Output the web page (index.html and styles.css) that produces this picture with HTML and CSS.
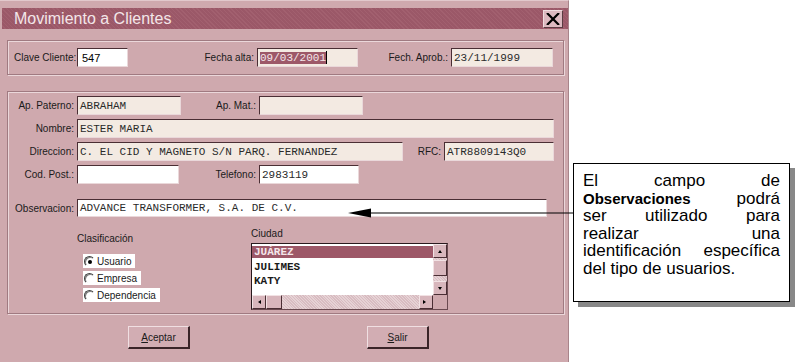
FILE: index.html
```html
<!DOCTYPE html>
<html lang="es">
<head>
  <meta charset="UTF-8">
  <title>Movimiento a Clientes</title>
  <link rel="stylesheet" href="styles.css">
</head>
<body>

<div class="page">
  <!-- Dialog -->
  <div class="dialog">
    <div class="titlebar">
      <span class="title">Movimiento a Clientes</span>
      <span class="close">
        <svg width="14" height="12" viewBox="0 0 14 12"><path d="M1 0 L13 12 M13 0 L1 12" stroke="#000" stroke-width="2.2"/></svg>
      </span>
    </div>

    <div class="group group-top">
      <span class="lbl w-clave">Clave Cliente:</span>
      <span class="field white sans w51">547</span>
      <span class="lbl right w128">Fecha alta:</span>
      <span class="field w101"><span class="sel">09/03/2001</span><span class="caret"></span></span>
      <span class="lbl right w93">Fech. Aprob.:</span>
      <span class="field w102">23/11/1999</span>
    </div>

    <div class="group group-main">
      <div class="row">
        <span class="lbl right col">Ap. Paterno:</span>
        <span class="field w104">ABRAHAM</span>
        <span class="lbl right w78">Ap. Mat.:</span>
        <span class="field w104"></span>
      </div>
      <div class="row">
        <span class="lbl right col">Nombre:</span>
        <span class="field w477">ESTER MARIA</span>
      </div>
      <div class="row">
        <span class="lbl right col">Direccion:</span>
        <span class="field w326">C. EL CID Y MAGNETO S/N PARQ. FERNANDEZ</span>
        <span class="lbl right w41">RFC:</span>
        <span class="field w110">ATR8809143Q0</span>
      </div>
      <div class="row">
        <span class="lbl right col">Cod. Post.:</span>
        <span class="field white w102"></span>
        <span class="lbl right w80">Telefono:</span>
        <span class="field white w100">2983119</span>
      </div>
      <div class="row row-obs">
        <span class="lbl right col">Observacion:</span>
        <span class="field white w470">ADVANCE TRANSFORMER, S.A. DE C.V.</span>
      </div>

      <div class="lower">
        <div class="clasif">
          <div class="caption">Clasificación</div>
          <div class="radios">
            <div class="radio"><span class="dot on"></span>Usuario</div>
            <div class="radio"><span class="dot"></span>Empresa</div>
            <div class="radio"><span class="dot"></span>Dependencia</div>
          </div>
        </div>
        <div class="ciudad">
          <div class="caption">Ciudad</div>
          <div class="listbox">
            <div class="list-body">
              <div class="items">
                <div class="item active">JUÁREZ</div>
                <div class="item">JULIMES</div>
                <div class="item">KATY</div>
              </div>
              <div class="vscroll">
                <span class="sbtn"><span class="tri up"></span></span>
                <span class="thumb-v"></span>
                <span class="track"></span>
                <span class="sbtn"><span class="tri down"></span></span>
              </div>
            </div>
            <div class="hscroll">
              <span class="sbtn"><span class="tri left"></span></span>
              <span class="thumb-h"></span>
              <span class="track"></span>
              <span class="sbtn"><span class="tri right"></span></span>
              <span class="corner"></span>
            </div>
          </div>
        </div>
      </div>
    </div>

    <div class="buttons">
      <span class="btn btn-ok"><u>A</u>ceptar</span>
      <span class="btn btn-exit"><u>S</u>alir</span>
    </div>
  </div>

  <!-- Note -->
  <div class="note">
    <span class="line">El campo de</span>
    <span class="line"><b>Observaciones</b> podrá</span>
    <span class="line">ser utilizado para</span>
    <span class="line">realizar una</span>
    <span class="line">identificación específica</span>
    <span class="line last">del tipo de usuarios.</span>
  </div>
  <svg class="arrow" width="230" height="12" viewBox="0 0 230 12">
    <path d="M22 6 H226" stroke="#000" stroke-width="1.2"/>
    <path d="M0 6 L23 1.5 L23 10.5 Z" fill="#000"/>
  </svg>
</div>

</body>
</html>
```

FILE: styles.css
```css
body {
  margin: 0;
  background: #fff;
  font-family: "Liberation Sans", Arial, sans-serif;
}
.page {
  position: relative;
  width: 796px;
  height: 362px;
}
.dialog {
  width: 568px;
  height: 359px;
  background: #cfa9ae;
  border-top: 1px solid #e2c8cc;
  border-right: 1px solid #a8848a;
  border-bottom: 2px solid #b58f95;
  padding-top: 7px;
}
.titlebar {
  margin-left: 2px;
  height: 21px;
  background: repeating-linear-gradient(45deg, #9b5868 0 2px, #a2606f 2px 3px);
  display: flex;
  align-items: center;
  justify-content: space-between;
}
.title {
  color: #f3e6e9;
  font-size: 16px;
  padding-left: 12px;
}
.close {
  width: 18px;
  height: 16px;
  margin-right: 5px;
  background: #dcb9c0;
  border-top: 1px solid #f0dde0;
  border-left: 1px solid #f0dde0;
  border-right: 1px solid #5a3c42;
  border-bottom: 1px solid #5a3c42;
  display: flex;
  align-items: center;
  justify-content: center;
}
.group {
  margin-left: 7px;
  width: 557px;
  border: 1px solid #a07a81;
  box-shadow: inset 1px 1px 0 #ebd7da, 1px 1px 0 #ebd7da;
  box-sizing: border-box;
}
.group-top {
  margin-top: 11px;
  height: 35px;
  display: flex;
  align-items: center;
  padding-left: 6px;
}
.group-main {
  margin-top: 16px;
  height: 223px;
  padding: 4px 0 0 2px;
}
.lbl {
  font-size: 10px;
  color: #1a1a1a;
  white-space: nowrap;
}
.right {
  text-align: right;
  padding-right: 3px;
  box-sizing: border-box;
}
.col { width: 67px; }
.w-clave { width: 63px; }
.w128 { width: 129px; }
.w93 { width: 93px; }
.w78 { width: 78px; }
.w41 { width: 41px; }
.w80 { width: 80px; }
.field {
  height: 19px;
  box-sizing: border-box;
  background: #f3eae2;
  border-top: 1px solid #4a2e34;
  border-left: 1px solid #4a2e34;
  border-right: 1px solid #ead8da;
  border-bottom: 1px solid #ead8da;
  font-family: "Liberation Mono", "Courier New", monospace;
  font-size: 11px;
  color: #2a2a2a;
  padding-left: 2px;
  display: flex;
  align-items: center;
  white-space: nowrap;
  overflow: hidden;
}
.white { background: #fff; }
.sans {
  font-family: "Liberation Sans", Arial, sans-serif;
  font-size: 11px;
  padding-left: 4px;
  color: #000;
}
.w51 { width: 51px; }
.w101 { width: 101px; }
.w102 { width: 102px; }
.w104 { width: 104px; }
.w477 { width: 477px; }
.w326 { width: 326px; }
.w110 { width: 110px; }
.w100 { width: 100px; }
.w470 { width: 470px; }
.sel {
  background: #9d5868;
  color: #f4e6ea;
}
.caret {
  width: 1px;
  height: 13px;
  background: #000;
}
.row {
  display: flex;
  align-items: center;
  margin-bottom: 4px;
}
.row-obs {
  margin-top: 15px;
}
.row-obs .field { height: 18px; }
.lower {
  display: flex;
  padding-left: 67px;
}
.caption {
  font-size: 10px;
  color: #1a1a1a;
}
.clasif {
  width: 174px;
  padding-top: 12px;
}
.radios {
  margin: 10px 0 0 6px;
  display: flex;
  flex-direction: column;
  align-items: flex-start;
  gap: 3px;
}
.radio {
  background: #fff;
  font-size: 10px;
  height: 14px;
  display: flex;
  align-items: center;
  padding-right: 4px;
  color: #1a1a1a;
}
.dot {
  width: 9px;
  height: 9px;
  border-radius: 50%;
  border: 1px solid #fff;
  border-top-color: #404040;
  border-left-color: #404040;
  box-shadow: inset 1px 1px 0 #808080;
  margin: 0 2px 0 1px;
  position: relative;
}
.dot.on::after {
  content: "";
  position: absolute;
  left: 3px;
  top: 3px;
  width: 4px;
  height: 4px;
  border-radius: 50%;
  background: #000;
}
.ciudad {
  padding-top: 7px;
}
.listbox {
  margin-top: 4px;
  width: 197px;
  height: 67px;
  box-sizing: border-box;
  border: 1px solid #2a1a1e;
  border-right-color: #6a4a50;
  border-bottom-color: #6a4a50;
  background: #fff;
  display: flex;
  flex-direction: column;
}
.list-body {
  display: flex;
  flex: 1;
}
.items {
  flex: 1;
  padding-top: 2px;
}
.item {
  font-family: "Liberation Mono", "Courier New", monospace;
  font-size: 11px;
  height: 14px;
  line-height: 14px;
  padding-left: 2px;
  color: #1a1a1a;
  font-weight: bold;
}
.item.active {
  background: #9d5868;
  color: #f4e6ea;
  height: 12px;
  line-height: 12px;
  margin-bottom: 2px;
}
.vscroll {
  width: 14px;
  display: flex;
  flex-direction: column;
  background: repeating-linear-gradient(45deg, #e6d2d5 0 1px, #d8bcc1 1px 2px);
}
.hscroll {
  height: 14px;
  display: flex;
  background: repeating-linear-gradient(45deg, #e6d2d5 0 1px, #d8bcc1 1px 2px);
}
.track { flex: 1; }
.sbtn, .thumb-v, .thumb-h, .corner {
  width: 14px;
  height: 14px;
  box-sizing: border-box;
  background: #d8b6bc;
  border-top: 1px solid #f2e2e4;
  border-left: 1px solid #f2e2e4;
  border-right: 1px solid #4a2e34;
  border-bottom: 1px solid #4a2e34;
  display: flex;
  align-items: center;
  justify-content: center;
}
.thumb-v { height: 16px; margin-top: 2px; }
.thumb-h { width: 16px; }
.corner {
  border: none;
  background: #cfa9ae;
}
.tri {
  width: 0;
  height: 0;
  border: 2.5px solid transparent;
}
.tri.up { border-bottom: 3px solid #000; border-top-width: 0; }
.tri.down { border-top: 3px solid #000; border-bottom-width: 0; }
.tri.left { border-right: 3px solid #000; border-left-width: 0; }
.tri.right { border-left: 3px solid #000; border-right-width: 0; }
.buttons {
  display: flex;
  margin-top: 12px;
  padding-left: 128px;
}
.btn {
  width: 62px;
  height: 23px;
  box-sizing: border-box;
  background: #d2adb3;
  border-top: 1px solid #f0dfe2;
  border-left: 1px solid #f0dfe2;
  border-right: 2px solid #3a2428;
  border-bottom: 2px solid #3a2428;
  font-size: 10px;
  color: #1a1a1a;
  display: flex;
  align-items: center;
  justify-content: center;
}
.btn-exit {
  margin-left: 177px;
}
.note {
  position: absolute;
  left: 573px;
  top: 163px;
  width: 217px;
  height: 139px;
  box-sizing: border-box;
  border: 1px solid #000;
  background: #fff;
  box-shadow: 5px 5px 0 #888;
  padding: 8px 9px 0 9px;
  font-size: 17px;
  line-height: 17.5px;
  color: #000;
}
.line {
  display: block;
  text-align: justify;
  text-align-last: justify;
  white-space: nowrap;
}
.line.last {
  text-align-last: left;
}
.note b {
  font-size: 15px;
}
.arrow {
  position: absolute;
  left: 348px;
  top: 207px;
}
```
